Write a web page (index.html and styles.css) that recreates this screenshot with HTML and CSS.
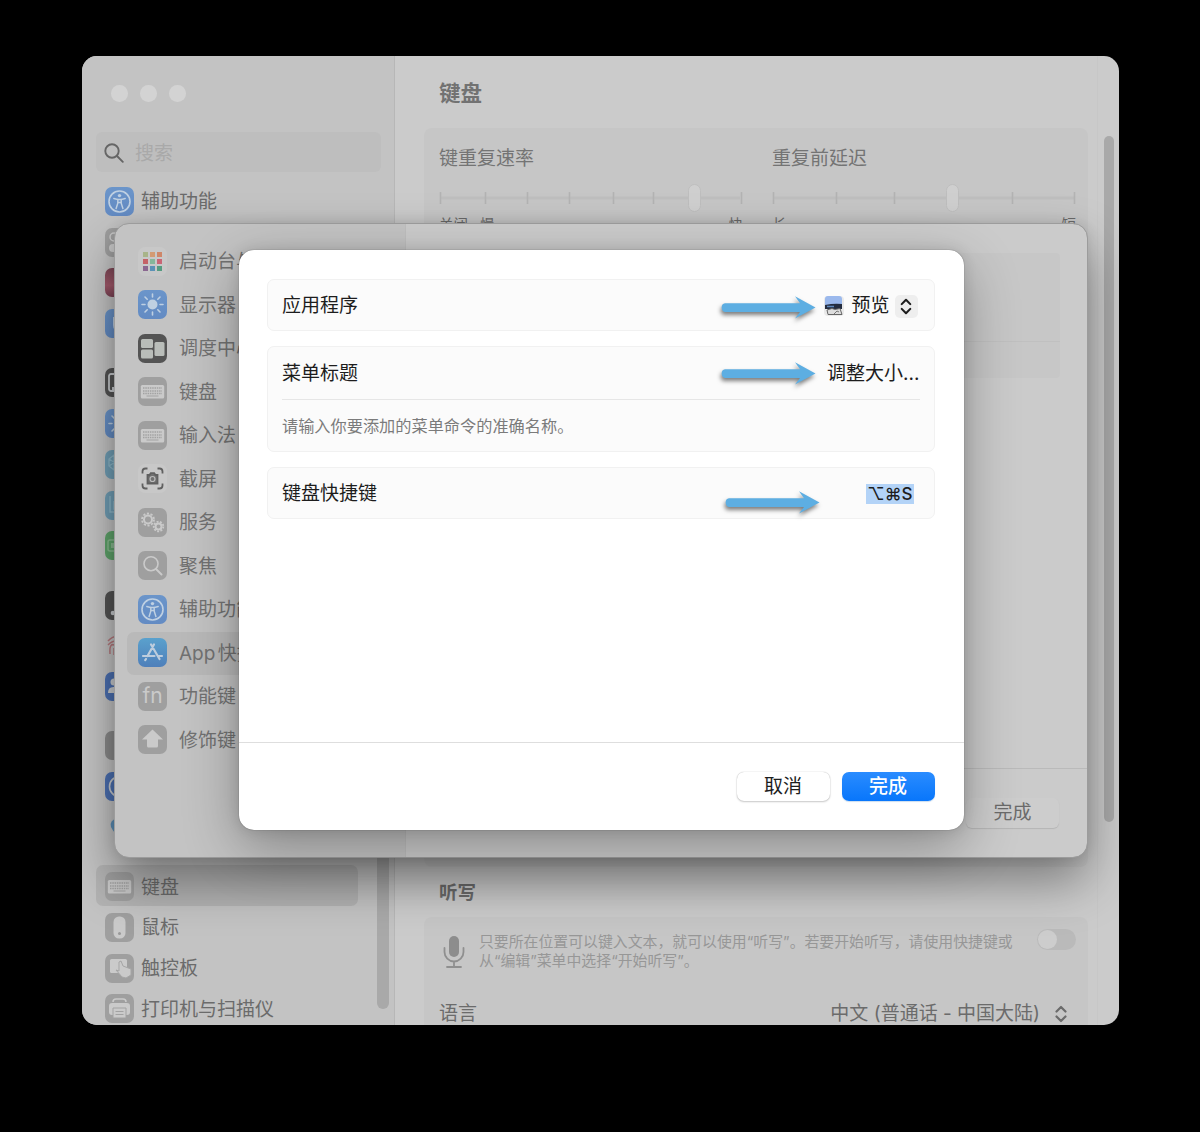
FILE: index.html
```html
<!DOCTYPE html>
<html lang="zh-CN">
<head>
<meta charset="utf-8">
<title>键盘</title>
<link rel="stylesheet" href="styles.css">
</head>
<body>
<svg class="defs" aria-hidden="true">
  <symbol id="i-access" viewBox="0 0 29 29"><circle cx="14.500" cy="14.500" r="10.500" fill="none" stroke="currentColor" stroke-width="1.600"/><circle cx="14.500" cy="8.600" r="1.700" fill="currentColor"/><path d="M8.800 11.500l4 1.100v3.600l-1.700 5.300M20.200 11.500l-4 1.100v3.600l1.700 5.300M12.800 12.600h3.400M12.900 15.500h3.200" fill="none" stroke="currentColor" stroke-width="1.500" stroke-linecap="round"/></symbol>
  <symbol id="i-keyboard" viewBox="0 0 29 29"><rect x="2.800" y="8" width="23.400" height="13.500" rx="1.600" fill="currentColor"/><path d="M5 11h19M5 14h19M5 16.500h19" stroke="#a2a2a2" stroke-width="1.300" stroke-dasharray="1.500 .8"/><path d="M8.500 19h12" stroke="#a2a2a2" stroke-width="1.100"/></symbol>
  <symbol id="i-sun" viewBox="0 0 29 29"><circle cx="14.500" cy="14.500" r="5" fill="currentColor"/><path d="M14.500 4v3M14.500 22v3M4 14.500h3M22 14.500h3M7 7l2.200 2.200M19.800 19.800l2.200 2.200M22 7l-2.200 2.200M9.200 19.800L7 22" stroke="currentColor" stroke-width="1.600" stroke-linecap="round"/></symbol>
  <symbol id="i-search" viewBox="0 0 29 29"><circle cx="13" cy="12.700" r="7" fill="none" stroke="currentColor" stroke-width="1.600"/><path d="M18 18l5.500 5.500" stroke="currentColor" stroke-width="2" stroke-linecap="round"/></symbol>
  <symbol id="i-updown" viewBox="0 0 14 20"><path d="M2.500 7.500L7 3l4.500 4.500M2.500 12.500L7 17l4.500-4.500" fill="none" stroke="currentColor" stroke-width="2.200" stroke-linecap="round" stroke-linejoin="round"/></symbol>
  <symbol id="i-arrow" viewBox="0 0 98 26"><path d="M5 8.200h75l-5-7L95.500 12.500 75 23.500l5-6.500H5c-4.500 0-4.500-8.800 0-8.800z" fill="#5daee2"/></symbol>
</svg>

<main class="window">
  <aside class="sidebar">
    <div class="lights"><i></i><i></i><i></i></div>
    <div class="search"><svg viewBox="0 0 20 20"><circle cx="8" cy="8" r="6.700"/><path d="M13 13l5.800 5.800"/></svg><span>搜索</span></div>
    <div class="side-list">
      <div class="group">
        <div class="item"><span class="icon blue"><svg><use href="#i-access"/></svg></span>辅助功能</div>
        <div class="item"><span class="icon gray"><svg viewBox="0 0 29 29"><circle cx="9" cy="9" r="4" fill="none" stroke="currentColor" stroke-width="1.500"/><rect x="4" y="16" width="14" height="8" rx="4" fill="currentColor"/></svg></span></div>
        <div class="item"><span class="icon siri"></span></div>
        <div class="item"><span class="icon blue"><svg viewBox="0 0 29 29"><path d="M8 8v8q0 6 6 7V8z" fill="currentColor"/></svg></span></div>
      </div>
      <div class="group">
        <div class="item"><span class="icon dark"><svg viewBox="0 0 29 29"><rect x="4" y="6" width="20" height="17" rx="2" fill="none" stroke="currentColor" stroke-width="1.800"/><path d="M7 19h10v4H7z" fill="currentColor"/></svg></span></div>
        <div class="item"><span class="icon blue"><svg><use href="#i-sun"/></svg></span></div>
        <div class="item"><span class="icon cyan"><svg viewBox="0 0 29 29"><path d="M9 5l6 4v7l-6 4-5-4V9zM9 5v15M4 9l11 7M15 9L4 16" fill="none" stroke="currentColor" stroke-width="1.300"/></svg></span></div>
        <div class="item"><span class="icon cyan"><svg viewBox="0 0 29 29"><path d="M5 5v16h12M9 10v8h9" fill="none" stroke="currentColor" stroke-width="1.500"/></svg></span></div>
        <div class="item"><span class="icon green"><svg viewBox="0 0 29 29"><rect x="3" y="9" width="20" height="11" rx="2" fill="none" stroke="currentColor" stroke-width="1.500"/><path d="M6 12h12v5H6z" fill="currentColor"/></svg></span></div>
      </div>
      <div class="group">
        <div class="item"><span class="icon dark"><svg viewBox="0 0 29 29"><circle cx="8" cy="22" r="2.300" fill="currentColor"/><path d="M9 10h12" stroke="currentColor" stroke-width="1.500"/></svg></span></div>
        <div class="item"><span class="icon clear"><svg viewBox="0 0 29 29"><path d="M3 10q8-9 18 0M3 14q8-8 15 0M5 23q-1-13 6-8M9 24V17" fill="none" stroke="#b57a7e" stroke-width="1.500"/></svg></span></div>
        <div class="item"><span class="icon royal"><svg viewBox="0 0 29 29"><circle cx="9" cy="10" r="3.500" fill="currentColor"/><path d="M3 21q0-7 7-6 6 1 6 6z" fill="currentColor"/></svg></span></div>
      </div>
      <div class="group">
        <div class="item"><span class="icon gray deep"></span></div>
        <div class="item"><span class="icon royal"><svg viewBox="0 0 29 29"><circle cx="14.500" cy="14.500" r="10" fill="none" stroke="currentColor" stroke-width="1.600"/></svg></span></div>
        <div class="item"><span class="icon clear"><svg viewBox="0 0 29 29"><path d="M13 5q-9 2-7 9 4 9 12 9z" fill="#5c90b8"/></svg></span></div>
      </div>
      <div class="group">
        <div class="item active"><span class="icon gray"><svg><use href="#i-keyboard"/></svg></span>键盘</div>
        <div class="item"><span class="icon gray"><svg viewBox="0 0 29 29"><rect x="8.500" y="3.500" width="12" height="22" rx="5.500" fill="currentColor"/><circle cx="14.500" cy="20.500" r="1.500" fill="#999"/></svg></span>鼠标</div>
        <div class="item"><span class="icon gray"><svg viewBox="0 0 29 29"><rect x="5" y="5" width="17" height="14" rx="1.500" fill="currentColor"/><path d="M14 8v9l-3-1 6 7 4 1 5-3v-6l-8-3-2-5z" fill="currentColor" stroke="#a5a5a5" stroke-width="1"/></svg></span>触控板</div>
        <div class="item"><span class="icon gray"><svg viewBox="0 0 29 29"><path d="M8 8q0-3 3-3h7q3 0 3 3" fill="none" stroke="currentColor" stroke-width="1.500"/><rect x="4" y="9" width="21" height="12" rx="3" fill="currentColor"/><path d="M8 14h13v10H8z" fill="currentColor" stroke="#a2a2a2"/><path d="M10.500 17.500h8M10.500 20.500h8" stroke="#a2a2a2"/></svg></span>打印机与扫描仪</div>
      </div>
    </div>
    <div class="side-scroll"></div>
  </aside>

  <section class="content">
    <div class="settings">
      <h1>键盘</h1>
      <div class="card sliders">
        <div class="slider-block">
          <div class="label">键重复速率</div>
          <svg class="slider" viewBox="0 0 304 28"><path d="M1 14h300" /><path d="M1.500 8v12M46.500 8v12M88.500 8v12M130.500 8v12M174.500 8v12M214.500 8v12M302.500 8v12"/><rect x="249.500" y=".5" width="12" height="27" rx="6"/></svg>
          <div class="scale"><span>关闭</span><span class="slow">慢</span><span class="end">快</span></div>
        </div>
        <div class="slider-block">
          <div class="label">重复前延迟</div>
          <svg class="slider" viewBox="0 0 304 28"><path d="M1 14h301" /><path d="M1.500 8v12M64.500 8v12M122.500 8v12M240.500 8v12M302.500 8v12"/><rect x="174.500" y=".5" width="12" height="27" rx="6"/></svg>
          <div class="scale"><span>长</span><span class="end">短</span></div>
        </div>
      </div>
      <h2>听写</h2>
      <div class="card dictation">
        <div class="dictate-row">
          <svg class="mic" viewBox="0 0 22 34"><rect x="6" y="1" width="10" height="21" rx="5" fill="#8d8d8d"/><path d="M1.500 13v4a9.500 9.500 0 0 0 19 0v-4M11 26.500v5M4 32h14" fill="none" stroke="#8f8f8f" stroke-width="1.800" stroke-linecap="round"/></svg>
          <p>只要所在位置可以键入文本，就可以使用<q>听写</q>。若要开始听写，请使用快捷键或<br>从<q>编辑</q>菜单中选择<q>开始听写</q>。</p>
          <span class="toggle"></span>
        </div>
        <div class="lang-row"><span>语言</span><span class="lang">中文 (普通话 - 中国大陆)</span><svg><use href="#i-updown"/></svg></div>
      </div>
    </div>
    <div class="track"><div class="thumb"></div></div>
  </section>

  <section class="sheet">
    <nav class="categories">
      <div class="cat"><span class="icon light"><svg viewBox="0 0 29 29"><path d="M5 5h5v5H5z" fill="#a8b489"/><path d="M12 5h5v5h-5z" fill="#d39a72"/><path d="M19 5h5v5h-5z" fill="#ce8668"/><path d="M5 12h5v5H5z" fill="#c46267"/><path d="M12 12h5v5h-5z" fill="#85b79a"/><path d="M19 12h5v5h-5z" fill="#c96575"/><path d="M5 19h5v5H5z" fill="#8b6790"/><path d="M12 19h5v5h-5z" fill="#5b92b6"/><path d="M19 19h5v5h-5z" fill="#559b80"/></svg></span>启动台与程序坞</div>
      <div class="cat"><span class="icon blue"><svg><use href="#i-sun"/></svg></span>显示器</div>
      <div class="cat"><span class="icon dark"><svg viewBox="0 0 29 29"><g fill="#b9bdb9"><rect x="3" y="5" width="12" height="9" rx="1.500"/><rect x="3" y="15.500" width="12" height="9" rx="1.500"/><rect x="16.500" y="8" width="10" height="14" rx="1.500"/></g></svg></span>调度中心</div>
      <div class="cat"><span class="icon gray"><svg><use href="#i-keyboard"/></svg></span>键盘</div>
      <div class="cat"><span class="icon gray"><svg><use href="#i-keyboard"/></svg></span>输入法</div>
      <div class="cat"><span class="icon light"><svg viewBox="0 0 29 29" fill="none" stroke="#606060" stroke-width="1.800"><path d="M4.500 9.500v-2q0-3 3-3h2M19.500 4.500h2q3 0 3 3v2M24.500 19.500v2q0 3-3 3h-2M9.500 24.500h-2q-3 0-3-3v-2"/><path d="M9.500 11h2l1.300-1.800h3.400l1.300 1.800h2v8.500h-10z" fill="#707070"/><circle cx="14.500" cy="15" r="2.500" stroke="#bbb" stroke-width="1.200"/></svg></span>截屏</div>
      <div class="cat"><span class="icon gray"><svg viewBox="0 0 29 29" fill="none" stroke="currentColor"><circle cx="10" cy="11.500" r="4" stroke-width="2"/><circle cx="10" cy="11.500" r="6" stroke-width="1.800" stroke-dasharray="2.200 1.570"/><circle cx="20.500" cy="18.500" r="3" stroke-width="2"/><circle cx="20.500" cy="18.500" r="4.800" stroke-width="1.800" stroke-dasharray="2 1.350"/></svg></span>服务</div>
      <div class="cat"><span class="icon gray"><svg><use href="#i-search"/></svg></span>聚焦</div>
      <div class="cat"><span class="icon blue"><svg><use href="#i-access"/></svg></span>辅助功能</div>
      <div class="cat active"><span class="icon store"><svg viewBox="0 0 29 29" fill="none" stroke="currentColor" stroke-width="2.200" stroke-linecap="round"><path d="M16 6.500L9.500 18M13 6.500L21.500 21M5 18h11.500M20 18h4M8 21l-.8 1.200"/></svg></span><span class="narrow">App 快捷键</span></div>
      <div class="cat"><span class="icon gray fn">fn</span>功能键</div>
      <div class="cat"><span class="icon gray"><svg viewBox="0 0 29 29"><path d="M14.500 4.500L25 14.500h-5v6.500q0 1.500-1.500 1.500h-8Q9 22.500 9 21v-6.500H4z" fill="currentColor"/></svg></span>修饰键</div>
    </nav>
    <div class="sheet-main">
      <div class="shortcut-box"></div>
      <div class="sheet-footer"><button type="button">完成</button></div>
    </div>
  </section>

  <section class="dialog">
    <div class="form">
      <div class="field"><span>应用程序</span><div class="picker">
        <svg class="preview" viewBox="0 0 20 20"><rect width="20" height="20" rx="4" fill="#e9e9e9"/><path d="M1 3q0-3 3-3h11q3 0 3 3v9H1z" fill="#9bb9ed"/><path d="M1 9q9-2 17-1v5H1z" fill="#242d40"/><path d="M3 10.500h7" stroke="#5f89bd" stroke-width="1.500"/><path d="M3 14l5-1.500 3 1 5-1 2 6H4z" fill="#ddd" stroke="#666" stroke-width="1"/><path d="M10 18l3-3 2 1" fill="none" stroke="#777"/></svg>
        <span>预览</span><i class="stepper"><svg><use href="#i-updown"/></svg></i></div></div>
      <div class="field-group">
        <div class="field-row"><span>菜单标题</span><span>调整大小...</span></div>
        <div class="hint">请输入你要添加的菜单命令的准确名称。</div>
      </div>
      <div class="field"><span>键盘快捷键</span><span class="keys">⌥⌘S</span></div>
    </div>
    <div class="actions"><button type="button">取消</button><button type="button" class="primary">完成</button></div>
    <svg class="arrow first"><use href="#i-arrow"/></svg>
    <svg class="arrow second"><use href="#i-arrow"/></svg>
    <svg class="arrow third"><use href="#i-arrow"/></svg>
  </section>
</main>
</body>
</html>
```

FILE: styles.css
```css
* { box-sizing: border-box; }
body {
  margin: 0;
  height: 1132px;
  padding: 56px 81px 0 82px;
  background: #000;
  overflow: hidden;
  font-family: Inter, "Noto Sans CJK SC", sans-serif;
  font-size: 19px;
  line-height: 28px;
}
.defs { position: absolute; width: 0; height: 0; }
svg { display: block; }
h1, h2, p { margin: 0; }
q { quotes: "“" "”"; }
button { font: inherit; border: 0; padding: 0; }

.window {
  position: relative;
  display: flex;
  height: 969px;
  border-radius: 15px;
  overflow: hidden;
  background: #cbcbcb;
  color: #6b6b6b;
}

/* Settings sidebar */
.sidebar {
  width: 313px;
  position: relative;
  flex: none;
  background: #c3c3c3;
  border-right: 1px solid #b7b7b7;
  padding: 29px 13px 0 14px;
}
.lights { display: flex; gap: 12.5px; padding-left: 15px; height: 47px; }
.lights i { width: 16.5px; height: 16.5px; border-radius: 50%; background: #d3d3d3; }
.search {
  height: 40px;
  display: flex;
  align-items: center;
  gap: 11px;
  padding: 2px 0 0 8px;
  background: #bebebe;
  border-radius: 6px;
  color: #a9a9a9;
}
.search span { padding-top: 2px; }
.search svg { width: 20px; height: 20px; fill: none; stroke: #666; stroke-width: 1.900; stroke-linecap: round; }
.side-list { margin: 8px -12px 0 0; }
.group { margin-bottom: 18.500px; }
.item { height: 40.750px; padding: 4px 0 0 9px; display: flex; align-items: center; gap: 7px; white-space: nowrap; }
.group .item.active { background: #b3b3b3; border-radius: 7px; margin-right: 35px; }
.side-scroll { position: absolute; right: 5px; top: 600px; width: 12px; height: 353px; border-radius: 6px; background: #a9a9a9; }

.icon {
  flex: none;
  width: 29px;
  height: 29px;
  margin-top: -2px;
  border-radius: 7px;
  color: #c9cccf;
  overflow: hidden;
}
.icon svg { width: 29px; height: 29px; }
.blue { background: linear-gradient(#6b95ca, #638bc3); color: #bfd0e2; }
.royal { background: #4c70b2; }
.gray { background: #9f9f9f; color: #cacaca; }
.deep { background: #8b8b8b; }
.dark { background: #545454; }
.siri { background: linear-gradient(#7d4756, #a35a6b 60%, #7b4355); }
.cyan { background: #719fb6; color: #8fb8c9; }
.green { background: #5fa46b; color: #8abb91; }
.store { background: linear-gradient(#5aa1cd, #4e7fba); color: #bdcddd; }
.light { background: #c8c8c8; }
.fn { font-size: 21px; line-height: 28px; text-align: center; }

/* Settings content */
.content { flex: 1; display: flex; justify-content: space-between; }
.settings { width: 664px; margin-left: 29px; }
h1 { height: 72px; padding: 22px 0 0 15px; font-size: 21.500px; line-height: 30px; font-weight: 600; color: #727272; }
.card { background: #c6c6c6; border-radius: 8px; }
.sliders { display: flex; gap: 29px; height: 739px; padding: 17px 14px 0 15px; }
.slider-block { width: 304px; }
.label { color: #747474; }
.slider { width: 304px; height: 28px; margin-top: 11px; fill: none; stroke: #b3b3b3; stroke-width: 1.600; }
.slider path:first-child { stroke: #bebebe; stroke-width: 3; }
.slider rect { fill: #cfcfcf; stroke: #bebebe; stroke-width: 1; }
.scale { display: flex; font-size: 14.500px; line-height: 22px; margin-top: 2px; }
.slow { margin-left: 12px; }
.end { margin-left: auto; }
h2 { font-size: 18.500px; line-height: 28px; font-weight: 600; padding: 11px 0 0 15px; height: 50px; }
.dictation { height: 120px; padding: 15px 12px 0 19px; }
.dictate-row { display: flex; height: 69px; align-items: flex-start; }
.mic { width: 22px; height: 34px; margin-top: 3px; }
p { flex: none; width: 558px; margin: 1px 0 0 14px; font-size: 14.880px; line-height: 19px; color: #979797; white-space: nowrap; }
.toggle { width: 39px; height: 21px; margin-top: -3px; border-radius: 11px; background: #bababa; padding: 1px; }
.toggle::before { content: ""; display: block; width: 19px; height: 19px; border-radius: 50%; background: #cdcdcd; }
.lang-row { display: flex; align-items: center; height: 28px; margin: -1px 0 0 -4px; padding-right: 8px; }
.lang { margin-left: auto; margin-right: 14px; }
.lang-row svg { width: 14px; height: 20px; }
.track { width: 22px; padding: 80px 5px 0 6px; border-left: 1px solid #c7c7c7; }
.thumb { height: 686px; border-radius: 6px; background: #a9a9a9; }

/* Keyboard shortcuts sheet */
.sheet {
  position: absolute;
  left: 33px;
  top: 168px;
  width: 972px;
  height: 633px;
  display: flex;
  border-radius: 14px;
  overflow: hidden;
  background: #cbcbcb;
  color: #717171;
  outline: 1px solid #9c9c9c;
  box-shadow: 0 24px 50px rgba(0,0,0,.4), 0 0 14px rgba(0,0,0,.12);
}
.categories { width: 291px; background: #c3c3c3; padding: 16px 12px; border-right: 1px solid #bebebe; }
.cat { height: 43.500px; display: flex; align-items: center; gap: 12px; padding: 1px 0 0 11px; white-space: nowrap; }
.cat.active { background: #b9b9b9; border-radius: 7px; }
.narrow { word-spacing: -3px; }
.sheet-main { flex: 1; display: flex; flex-direction: column; }
.shortcut-box { margin: 29px 27px 0; height: 125px; background: linear-gradient(#c7c7c7 88px, #c0c0c0 88px, #c0c0c0 89px, #c7c7c7 89px); border-radius: 4px; }
.sheet-footer { margin-top: auto; height: 89px; border-top: 1px solid #bababa; display: flex; justify-content: flex-end; padding: 29px 28px; }
.sheet-footer button { width: 93px; height: 30px; line-height: 28px; background: #cdcdcd; border-radius: 6px; box-shadow: 0 1px 1px #b5b5b5; color: #6b6b6b; }

/* Shortcut editor */
.dialog {
  position: absolute;
  left: 156.5px;
  top: 194px;
  width: 725px;
  height: 580px;
  display: flex;
  flex-direction: column;
  border-radius: 15px;
  background: #fff;
  color: #1d1d1d;
  box-shadow: 0 0 1px rgba(0,0,0,.6), 0 18px 55px rgba(0,0,0,.32), 0 0 14px rgba(0,0,0,.12);
}
.form { flex: 1; padding: 28.500px 29px 0 28.500px; display: flex; flex-direction: column; gap: 15px; }
.field, .field-group { border: 1px solid #f1f1f1; border-radius: 7px; background: #fbfbfb; padding: 0 14px; }
.field { height: 52px; display: flex; align-items: center; justify-content: space-between; padding-top: 3px; }
.field-group { height: 106px; }
.field-row { height: 53px; padding-top: 2px; display: flex; align-items: center; justify-content: space-between; border-bottom: 1px solid #e6e6e6; }
.hint { font-size: 16.200px; line-height: 52px; color: #7b7b7b; }
.picker { display: flex; align-items: center; margin-right: 2px; }
.preview { width: 20px; height: 20px; margin-right: 7px; }
.stepper { width: 23px; height: 23px; margin-left: 5px; border-radius: 5px; background: #eee; display: grid; place-items: center; }
.stepper svg { width: 14px; height: 19px; }
.keys { background: #b3d3f7; line-height: 20px; padding: 0 1px; margin-right: 6px; font-size: 17px; font-weight: 500; }
.actions { height: 88px; border-top: 1px solid #dedede; display: flex; justify-content: flex-end; gap: 12px; padding: 29px 29px 0; }
.actions button { width: 93px; height: 29px; border-radius: 7px; background: #fff; color: #1d1d1d; box-shadow: 0 0 1px #aaa, 0 1px 2px #ccc; line-height: 29px; }
.actions .primary { color: #fff; background: linear-gradient(#2a8cff, #0876fb); box-shadow: 0 1px 1px #cde; font-weight: 500; }
.arrow { position: absolute; width: 98px; height: 26px; left: 481px; overflow: visible; filter: drop-shadow(-1px 3px 2px rgba(0,0,0,.5)); }
.first { top: 45px; }
.second { top: 111px; }
.third { left: 485px; top: 240px; }
```
